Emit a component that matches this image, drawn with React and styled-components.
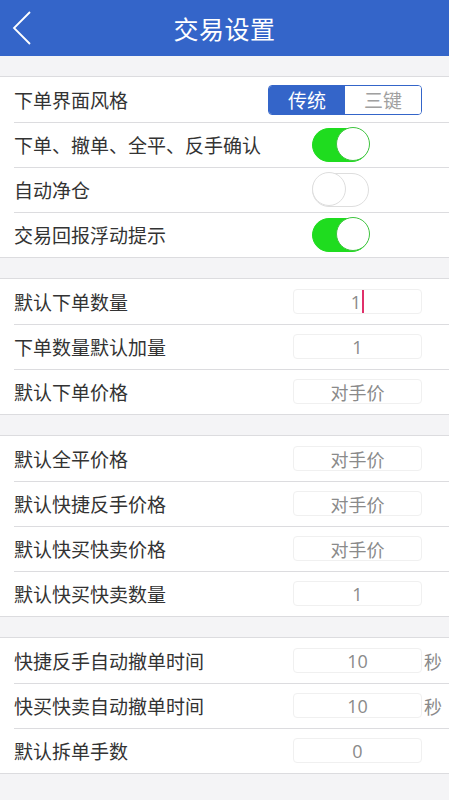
import React from "react";
import styled, { createGlobalStyle } from "styled-components";

const Global = createGlobalStyle`
  html, body { margin: 0; padding: 0; background: #f4f4f6; }
  body { font-family: "Noto Sans CJK SC", "Noto Sans", sans-serif; }
  * { box-sizing: border-box; }
`;

const Page = styled.div`
  width: 449px;
  min-height: 800px;
  background: #f4f4f6;
  display: flex;
  flex-direction: column;
`;

const Header = styled.header`
  height: 56px;
  background: #3465c9;
  display: flex;
  align-items: center;
  justify-content: center;
  position: relative;
`;

const Title = styled.h1`
  margin: 0;
  color: #fff;
  font-size: 25px;
  font-weight: 400;
  letter-spacing: 0.5px;
`;

const Back = styled.button`
  position: absolute;
  left: 8px;
  top: 8px;
  width: 30px;
  height: 40px;
  border: 0;
  background: transparent;
  padding: 0;
`;

const Section = styled.section`
  margin-top: 20px;
  background: #fff;
  border-top: 1px solid #dcdcdf;
  border-bottom: 1px solid #dcdcdf;
`;

const Row = styled.div`
  height: 45px;
  display: flex;
  align-items: center;
  padding-left: 14px;
  position: relative;
  & + &::before {
    content: "";
    position: absolute;
    left: 14px;
    right: 0;
    top: 0;
    border-top: 1px solid #dcdcdf;
  }
`;

const Label = styled.span`
  flex: 1;
  font-size: 19px;
  color: #333;
  line-height: 1;
  white-space: nowrap;
`;

const Control = styled.div`
  width: 154px;
  margin-right: 27px;
  flex: none;
  display: flex;
  align-items: center;
  position: relative;
`;

const Segmented = styled.div`
  display: flex;
  width: 154px;
  height: 30px;
  border: 1px solid #3465c9;
  border-radius: 4px;
  overflow: hidden;
`;

const Seg = styled.div`
  flex: 1;
  display: flex;
  align-items: center;
  justify-content: center;
  font-size: 19px;
  background: ${(p) => (p.$active ? "#3465c9" : "#fff")};
  color: ${(p) => (p.$active ? "#fff" : "#a0a0a0")};
`;

const Switch = styled.div`
  margin-left: 44px;
  width: 57px;
  height: 34px;
  border-radius: 17px;
  position: relative;
  background: ${(p) => (p.$on ? "#1fdc1f" : "#fff")};
  border: 1.5px solid ${(p) => (p.$on ? "#1fdc1f" : "#dedede")};
  &::after {
    content: "";
    position: absolute;
    top: -1.5px;
    ${(p) => (p.$on ? "right: -1.5px;" : "left: -1.5px;")}
    width: 34px;
    height: 34px;
    border-radius: 50%;
    background: #fff;
    border: 1.5px solid ${(p) => (p.$on ? "#3fc43f" : "#dedede")};
    box-sizing: border-box;
  }
`;

const InputBox = styled.div`
  width: 129px;
  margin-left: 25px;
  height: 25px;
  border: 1px solid #f0f0f0;
  border-radius: 4px;
  display: flex;
  align-items: center;
  justify-content: center;
  font-size: 18px;
  color: #8a8a8a;
  font-family: "Open Sans", "Noto Sans CJK SC", sans-serif;
  position: relative;
`;

const Caret = styled.span`
  display: inline-block;
  width: 2px;
  height: 23px;
  background: #e0306a;
  margin-left: 1px;
`;

const Unit = styled.span`
  position: absolute;
  left: 156px;
  font-size: 18px;
  color: #8a8a8a;
`;

const Chevron = () => (
  <svg width="30" height="40" viewBox="0 0 30 40">
    <polyline points="22,4 6,20 22,36" fill="none" stroke="#fff" strokeWidth="1.8" />
  </svg>
);

function InputRow({ label, value, caret, unit }) {
  return (
    <Row>
      <Label>{label}</Label>
      <Control>
        <InputBox>
          {value}
          {caret && <Caret />}
        </InputBox>
        {unit && <Unit>{unit}</Unit>}
      </Control>
    </Row>
  );
}

function SwitchRow({ label, on }) {
  return (
    <Row>
      <Label>{label}</Label>
      <Control>
        <Switch $on={on} />
      </Control>
    </Row>
  );
}

export default function App() {
  return (
    <Page>
      <Global />
      <Header>
        <Back aria-label="返回">
          <Chevron />
        </Back>
        <Title>交易设置</Title>
      </Header>

      <Section>
        <Row>
          <Label>下单界面风格</Label>
          <Control>
            <Segmented>
              <Seg $active>传统</Seg>
              <Seg>三键</Seg>
            </Segmented>
          </Control>
        </Row>
        <SwitchRow label="下单、撤单、全平、反手确认" on />
        <SwitchRow label="自动净仓" on={false} />
        <SwitchRow label="交易回报浮动提示" on />
      </Section>

      <Section>
        <InputRow label="默认下单数量" value="1" caret />
        <InputRow label="下单数量默认加量" value="1" />
        <InputRow label="默认下单价格" value="对手价" />
      </Section>

      <Section>
        <InputRow label="默认全平价格" value="对手价" />
        <InputRow label="默认快捷反手价格" value="对手价" />
        <InputRow label="默认快买快卖价格" value="对手价" />
        <InputRow label="默认快买快卖数量" value="1" />
      </Section>

      <Section>
        <InputRow label="快捷反手自动撤单时间" value="10" unit="秒" />
        <InputRow label="快买快卖自动撤单时间" value="10" unit="秒" />
        <InputRow label="默认拆单手数" value="0" />
      </Section>
    </Page>
  );
}
